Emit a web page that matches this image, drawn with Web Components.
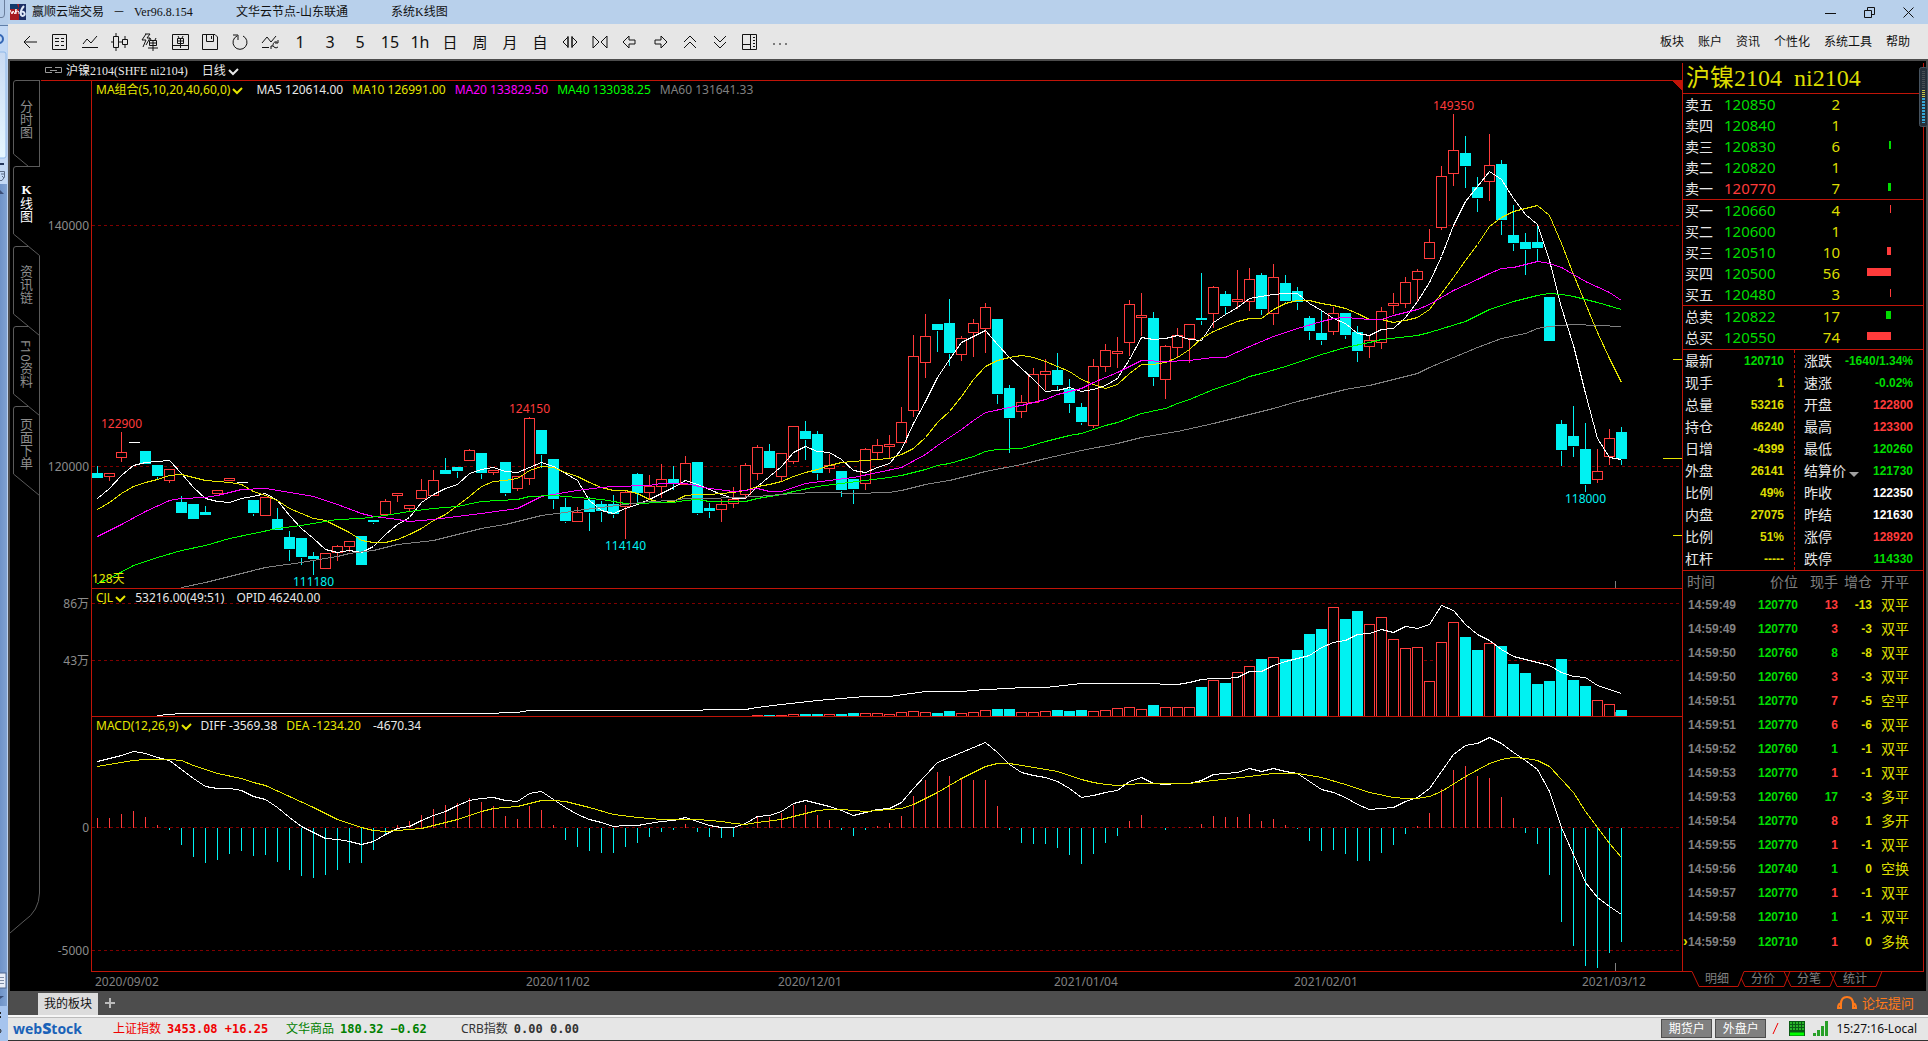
<!DOCTYPE html>
<html lang="zh-CN">
<head>
<meta charset="utf-8">
<title>赢顺云端交易</title>
<style>
  html, body { margin: 0; height: 100%; background: #000; }
  body {
    --red: #c01408;
    --up: #ff3b3b;
    --down: #00f2f2;
    --green: #00dc00;
    --yellow: #dcdc00;
    --gray: #808080;
    --white: #e8e8e8;
    --frame: #4d4d4d;
    --panel: #e6e6e6;
    --ui: "Noto Sans", "Noto Sans CJK SC", sans-serif;
    --song: "Liberation Serif", "Noto Sans CJK SC", serif;
    --num: "Liberation Sans", "Noto Sans CJK SC", sans-serif;
    font: 12px/18px var(--ui);
    color: var(--white);
    overflow: hidden;
  }
</style>
</head>
<body>
<trade-app>
  <title-bar slot="title"></title-bar>
  <tool-bar slot="tools"></tool-bar>
  <side-tabs slot="side"></side-tabs>
  <k-chart slot="chart"></k-chart>
  <quote-panel slot="quote" name="沪镍2104" code="ni2104"></quote-panel>
  <board-bar slot="boards"></board-bar>
  <status-bar slot="status"></status-bar>
</trade-app>

<script>
const define = (name, css, html, after) => {
  customElements.define(name, class extends HTMLElement {
    constructor() {
      super();
      this.attachShadow({ mode: "open" });
    }

    connectedCallback() {
      const markup = typeof html === "function" ? html(this) : html;
      this.shadowRoot.innerHTML = `
        <style>
          *, :host { box-sizing: border-box; }
          button { font: inherit; color: inherit; background: none; border: 0; padding: 0; margin: 0; white-space: nowrap; }
          svg { display: block; }
          ${css}
        </style>${markup}`;
      if (after) after(this);
    }
  });
};

/* ---------- frame ---------- */

define("trade-app", `
  :host { display: flex; height: 100vh; }
  .rest { flex: none; width: 8px; }
  .window { flex: 1; min-width: 0; display: flex; flex-direction: column; }
  .main { flex: 1; min-height: 0; display: flex; background: #000; border: 2px solid var(--frame); border-bottom: 0; padding-right: 2px; }
  slot[name=side], slot[name=quote] { display: block; flex: none; }
  slot[name=side] { width: 31px; }
  slot[name=quote] { width: 242px; }
  slot[name=chart] { display: block; flex: 1; min-width: 0; }
`, `
  <desk-edge class="rest"></desk-edge>
  <div class="window">
    <slot name="title"></slot>
    <slot name="tools"></slot>
    <div class="main">
      <slot name="side"></slot>
      <slot name="chart"></slot>
      <slot name="quote"></slot>
    </div>
    <slot name="boards"></slot>
    <slot name="status"></slot>
  </div>
`);

// sliver of the window that lies behind this one
define("desk-edge", `
  :host { display: block; background: #a6c4ee; overflow: hidden; }
`, `
  <svg width="8" height="1041" aria-hidden="true">
    <defs>
      <linearGradient id="a" x1="0" y1="0" x2="0" y2="1"><stop offset="0" stop-color="#c9daf2"/><stop offset="1" stop-color="#e6f7ff"/></linearGradient>
      <linearGradient id="b" x1="0" y1="0" x2="1" y2="0"><stop offset="0" stop-color="#6f93c8"/><stop offset="1" stop-color="#83a5d4"/></linearGradient>
    </defs>
    <rect width="8" height="25" fill="#b5cdea"/>
    <path d="M0 17.500H2Q4.500 17.500 4.500 14V0" fill="none" stroke="#6b7f9c"/>
    <path d="M0 25.500H8" stroke="#5f7ea8"/>
    <rect y="26" width="8" height="158" fill="#c3d9f5"/>
    <circle cx="-1" cy="39" r="4" fill="none" stroke="#3466b4" stroke-width="2"/>
    <rect x="-4" y="52" width="10" height="106" rx="2" fill="url(#a)" stroke="#8fb8e8"/>
    <path d="M0 164H4" stroke="#23375c" stroke-width="2"/>
    <path d="M0 171.500H4.500V177L2 180.500H0M1 174H4M2 176L4 178" fill="none" stroke="#5a6b85"/>
    <rect y="184" width="8" height="822" fill="url(#b)"/>
    <path d="M0 190L4 194H0z" fill="#3b4f78"/>
    <rect x="-3" y="973" width="9" height="15" fill="#e8eef8" stroke="#50688f"/>
    <path d="M0 977.500H4M0 980.500H4M0 983.500H4" stroke="#7d8ca5"/>
    <path d="M0 999V996H4z" fill="#3b4f78"/>
    <path d="M7.500 26V1006" stroke="#bcd2f0"/>
    <path d="M0 1013H1M0 1017H1" stroke="#222" stroke-width="2"/>
    <circle cx="-1" cy="1031" r="2" fill="none" stroke="#222"/>
  </svg>
`);

define("title-bar", `
  :host { display: flex; align-items: center; height: 24px; background: #b8d0eb; color: #111; font: 12px/18px var(--song); white-space: pre; }
  .logo { margin: 0 6px 0 2px; }
  .name { width: 204px; display: flex; gap: 9px; }
  .node { width: 155px; }
  .win { margin-left: auto; display: flex; }
  .win button { width: 39px; height: 24px; display: grid; place-items: center; }
  .win svg { fill: none; stroke: #111; }
`, `
  <svg class="logo" width="16" height="16" aria-hidden="true">
    <rect width="16" height="16" fill="#1d2f66"/>
    <path d="M0 0H9V16H0z" fill="#a81c20"/><path d="M0 0H7L9 5H0z" fill="#123a6b"/>
    <path d="M0 6L2 10L3 7L5 10L6 5V10M6 8Q8 6 9 8V10" fill="none" stroke="#fff"/>
    <path d="M14 2Q10 6 11 11A2 2 0 1 0 12 8" fill="none" stroke="#dfe8f8" stroke-width="2"/>
  </svg>
  <span class="name"><span>赢顺云端交易</span><span>－</span><span>Ver96.8.154</span></span>
  <span class="node">文华云节点-山东联通</span>
  <span>系统K线图</span>
  <div class="win">
    <button aria-label="最小化"><svg width="11" height="11"><path d="M0 6.500H11"/></svg></button>
    <button aria-label="还原"><svg width="11" height="11"><path d="M.500 3.500H7.500V10.500H.500zM3.500 3V.500H10.500V7.500H8"/></svg></button>
    <button aria-label="关闭"><svg width="11" height="11"><path d="M.500 .500L10.500 10.500M10.500 .500L.500 10.500"/></svg></button>
  </div>
`);

/* ---------- toolbar ---------- */

const tools = [
  ["返回", "M16 9H3M9 3L3 9L9 15"],
  ["报价", "M1.500 1.500H15.500V16.500H1.500zM4 5.500H8M10 5.500H13M4 8.500H8M10 8.500H13M4 12.500H8M10 12.500H13"],
  ["分时", "M1 14.500H17M2 11L6 6L10 10L16 3"],
  ["K线", "M2.500 3.500H7.500V14.500H2.500zM5 0V3M5 15V18M11.500 6.500H16.500V11.500H11.500zM14 3V6M14 12V15M0 9H2M8 9H11"],
  ["闪电下单", "M5 1L1 7H5L2 14M4 1H9L6 5H9L5 12M8.500 7.500H15.500V12.500H8.500zM12 7V18M8 10H16M7 15H17M9 5L10 7M15 5L14 7"],
  ["下单", "M1.500 1.500H17.500V16.500H1.500zM6.500 5.500H12.500V10.500H6.500zM9.500 5V15M6 8H13M1 12.500H18M7 3L8 5M12 3L11 5"],
  ["保存", "M1.500 1.500H14L16.500 4V16.500H1.500zM5.500 2V8.500H12.500V2M10.500 3V6"],
  ["刷新", "M6 3A7 7 0 1 0 12 3M2 2H7V7"],
  ["画线刷新", "M1 14.500H8M1 10L6 4L10 9L15 3M16 9A3 3 0 1 0 17 14M17 7V10H14M10 16V13H12"],
  "1", "3", "5", "15", "1h", "日", "周", "月", "自",
  ["放大", "M7 4L2 9L7 14zM11 4L16 9L11 14zM7 3V15M11 3V15"],
  ["缩小", "M2 3V15L8 9zM16 3V15L10 9z"],
  ["左移", "M2 9L8 3V7H14V11H8V15z"],
  ["右移", "M16 9L10 3V7H4V11H10V15z"],
  ["上翻", "M3 9L9 3L15 9M3 15L9 9L15 15"],
  ["下翻", "M3 3L9 9L15 3M3 9L9 15L15 9"],
  ["布局", "M1.500 1.500H15.500V16.500H1.500zM9.500 2V16M2 11.500H9M12 4.500H14M12 7.500H14M12 10.500H14M12 13.500H14"],
  ["更多", "M2 11H4M8 11H10M14 11H16"],
];

define("tool-bar", `
  :host { display: flex; align-items: center; justify-content: space-between; height: 35px; background: var(--panel); color: #111; padding: 1px 18px 0 7px; }
  div { display: flex; }
  .tools button { width: 30px; height: 28px; display: grid; place-items: center; font: 15px/20px var(--ui); }
  .tools .num { font-size: 16px; }
  .tools svg { fill: none; stroke: #111; }
  .menu { gap: 14px; }
`, `
  <div class="tools">${tools.map((t) => typeof t === "string"
    ? `<button class="${/\d/.test(t) ? "num" : ""}">${t}</button>`
    : `<button aria-label="${t[0]}"><svg width="18" height="18"><path d="${t[1]}"/></svg></button>`).join("")}</div>
  <div class="menu">${["板块", "账户", "资讯", "个性化", "系统工具", "帮助"].map((m) => `<button>${m}</button>`).join("")}</div>
`);

/* ---------- left tabs ---------- */

define("side-tabs", `
  :host { display: block; position: relative; height: 100%; padding-top: 19px; }
  svg { position: absolute; left: 0; top: 0; fill: none; stroke: #5a5a5a; }
  nav { position: relative; display: flex; flex-direction: column; color: #8c8c8c; padding-left: 3px; }
  button { height: 80px; width: 26px; writing-mode: vertical-rl; font-size: 13px; line-height: 26px; padding-bottom: 4px; }
  button:first-child { height: 86px; padding-bottom: 8px; }
  .on { color: #fff; padding-bottom: 8px; }
  .on b { text-orientation: upright; font-family: var(--song); }
`, `
  <svg width="31" height="900" aria-hidden="true">
    <path d="M29.500 105.500V21M29.500 19.500H6Q3.500 19.500 3.500 22V93L18.500 105.500M18 105.500H30M29.500 19V106"/>
    <path d="M18 105.500H6Q3.500 105.500 3.500 108V173L29.500 194.500V832Q29 850 14 860L0 872"/>
    <path d="M18 185.500H6Q3.500 185.500 3.500 188V253L29.500 274.500"/>
    <path d="M18 265.500H6Q3.500 265.500 3.500 268V333L29.500 354.500"/>
    <path d="M18 345.500H6Q3.500 345.500 3.500 348V413L29.500 434.500"/>
  </svg>
  <nav>
    <button>分时图</button>
    <button class="on"><b>K</b>线图</button>
    <button>资讯链</button>
    <button>F10资料</button>
    <button>页面下单</button>
  </nav>
`);

/* ---------- chart ---------- */

// one candle per entry: u(p) / d(own) / n(o trade), then high, body top, body bottom, low
const candles = `
d465,473,478,478 u473,473,476,480 u431,452,457,461 n442,442,442,442 d451,451,464,464 d465,465,476,478 u469,469,480,482 d495,502,513,513
d504,504,519,519 d505,512,515,515 u490,490,493,493 u478,478,480,480 n482,482,482,482 d500,500,513,515 u497,497,515,515 d507,519,530,530
d530,537,549,560 d538,538,557,564 d551,556,559,574 u553,553,568,568 u544,546,552,560 u541,541,546,551 d536,536,565,565 d520,520,522,523
u498,501,514,514 u493,493,495,501 u505,505,508,510 u478,490,498,498 u469,480,495,495 d457,470,474,474 d467,467,471,477 u448,450,460,460
d453,453,473,478 u470,470,472,474 d462,462,493,495 u476,476,488,490 u416,418,478,484 d430,430,454,467 d459,459,499,508 d497,507,521,522
u506,512,521,521 d496,500,512,530 d500,504,511,521 d494,504,514,517 u489,492,506,538 d472,474,493,503 u474,486,492,499 u463,479,486,497
d465,479,483,489 u455,463,484,484 d462,462,513,514 d502,508,511,517 u498,504,509,521 u486,499,503,507 u462,465,494,497 u444,447,473,479
d443,451,468,468 u453,453,476,480 u425,426,461,463 d420,431,439,459 d430,434,473,479 u453,465,468,472 d471,471,490,496 d479,479,489,503
u447,449,483,489 u438,445,452,459 u434,444,446,457 u406,422,442,442 u334,356,410,416 u313,336,362,377 d323,324,330,351 d298,323,353,365
u335,338,354,360 u318,323,332,356 u302,307,328,352 d319,319,394,403 d384,388,418,452 u394,402,411,417 u367,374,402,402 u358,371,374,389
d352,370,385,390 d378,389,403,412 d402,407,422,424 u358,366,425,427 u343,350,366,371 u336,351,353,367 u299,304,342,355 u292,315,317,335
d311,318,377,385 u344,346,379,398 u327,335,347,356 u323,324,338,362 d272,318,320,324 u285,287,313,327 d290,294,306,314 u269,299,301,308
u267,279,301,310 d272,275,309,314 u263,277,313,324 d274,283,301,302 d286,291,302,309 d315,318,331,339 d309,333,340,344 u306,313,331,334
d312,313,335,338 d325,332,351,361 u335,340,346,357 u306,311,342,348 u292,303,305,313 u276,282,303,307 u268,271,279,300 u228,242,258,258
u165,176,227,229 u113,150,173,185 d135,153,166,187 d176,187,198,211 u133,165,181,200 d159,164,220,234 d204,235,243,250 d232,242,249,274
d224,242,248,261 d297,297,341,341 d419,424,450,465 d405,436,446,456 d422,449,484,491 u448,471,479,482 u428,438,456,464 d426,432,459,464
`.trim().split(/\s+/).map((s) => [s[0], ...s.slice(1).split(",").map(Number)]);

const ma5 = [498,488,475,465,462,461,460,473,487,498,501,502,498,496,493,500,515,528,538,549,552,550,552,546,534,524,517,502,494,488,484,473,469,467,471,472,467,462,466,473,480,500,510,513,508,504,499,493,487,480,484,489,494,498,498,486,476,466,452,446,451,452,459,470,472,467,463,449,423,401,377,359,342,336,330,344,357,368,379,391,390,387,391,389,385,378,359,337,339,338,335,339,340,322,314,307,298,296,294,293,293,303,310,318,323,333,335,329,328,317,301,282,256,225,201,186,171,179,198,214,224,260,307,345,393,438,457,459];
const ma10 = [509,502,493,486,482,479,475,474,477,480,481,482,484,491,495,500,508,513,518,520,526,532,540,542,542,539,534,528,520,514,505,496,486,481,480,478,470,466,467,472,476,482,487,490,490,493,499,502,501,495,494,494,493,492,490,486,484,481,476,472,469,465,462,461,460,459,458,454,448,437,422,411,396,379,366,360,357,355,357,361,366,371,379,384,388,384,373,364,364,362,357,349,338,331,326,321,318,318,309,303,300,300,303,305,308,313,319,319,322,320,317,309,293,277,260,244,226,217,211,208,205,215,243,274,303,332,358,382];
// sparse series: bar index, row
const ma20 = [0,536,2,524,4,511,6,500,7,498,9,497,10,495,12,489,14,488,16,492,18,496,20,504,22,513,23,516,25,519,26,521,28,519,30,516,32,513,35,508,36,502,37,496,38,494,39,492,40,490,42,487,43,486,46,485,47,483,49,483,51,488,53,491,54,490,55,488,56,491,57,491,58,487,59,483,61,480,63,477,65,472,67,467,69,454,70,445,72,429,73,420,74,412,76,407,77,405,79,399,80,394,82,388,83,382,85,372,87,360,89,361,91,360,93,357,94,357,96,346,98,336,100,328,102,321,103,318,104,317,105,318,106,319,107,319,108,315,110,309,111,304,113,290,115,279,116,273,117,268,118,267,120,261,121,263,122,267,124,281,126,292,127,300];
const ma40 = [0,583,1,578,3,565,5,557,7,550,9,545,11,538,13,533,15,528,17,525,20,519,22,518,24,515,26,511,28,508,30,506,32,501,35,499,36,496,38,495,40,497,42,499,43,501,44,503,48,502,49,500,50,499,51,501,54,501,55,498,57,494,58,491,60,486,62,483,64,480,66,477,67,475,69,469,70,465,71,463,73,456,74,451,75,449,77,448,79,441,81,435,82,433,84,425,85,422,87,413,89,408,90,403,91,399,93,389,95,381,96,376,97,373,99,366,101,358,102,354,104,347,106,342,107,339,110,335,111,332,114,321,116,309,118,301,120,295,121,293,122,294,123,296,125,302,127,309];
const ma60 = [7,587,9,582,12,573,14,567,17,562,19,558,20,556,21,553,23,550,25,544,28,540,30,534,32,528,34,524,35,521,37,515,39,512,40,510,42,507,44,504,46,501,48,500,49,498,51,498,53,497,55,496,57,494,58,493,60,492,61,492,63,493,66,492,67,490,69,484,71,480,74,471,77,464,79,458,82,450,85,443,87,437,90,431,93,423,96,414,98,408,100,401,102,395,104,389,106,385,108,379,110,373,111,367,113,357,115,347,117,338,119,333,120,328,121,326,123,324,127,326];

// volume tops, first bar tall enough to show is number 55
const volume = [715,715,715,714,714,714,714,714,713,713,713,714,712,711,712,713,711,713,712,710,709,709,712,712,711,710,711,710,711,710,708,707,709,705,707,707,707,687,680,683,672,666,659,657,659,650,634,629,607,619,611,624,617,639,648,647,681,642,622,637,650,643,646,664,673,684,681,659,680,686,700,704,710];
const opid = [5,715,7,713,32,713,35,712,36,710,50,710,51,709,54,709,55,707,57,704,60,700,62,698,64,696,66,696,69,691,72,691,74,689,76,688,77,687,79,687,82,683,88,683,89,684,90,684,91,682,92,679,93,678,94,678,95,677,96,671,97,671,98,665,99,661,101,655,102,647,103,642,104,640,105,634,106,633,107,629,108,632,109,626,110,628,111,624,112,605,113,610,114,624,115,634,116,640,117,649,118,656,119,659,120,662,121,665,122,672,123,676,124,677,125,685,126,689,127,693];

const hist = [817,817,813,810,816,824,829,844,856,862,859,853,850,855,854,861,869,875,877,874,869,862,862,849,834,824,820,814,808,804,802,797,801,805,815,818,805,809,824,839,846,850,852,852,846,842,836,831,829,823,831,836,837,836,827,816,816,812,804,804,814,819,829,835,829,825,822,815,795,779,771,775,777,779,779,805,829,842,843,843,847,854,863,853,842,835,820,814,827,829,827,826,823,815,816,816,813,820,818,824,828,840,850,849,853,860,860,852,844,833,825,812,788,769,765,775,777,796,817,832,843,874,921,945,965,967,952,941];
const diff = [761,758,755,751,753,757,760,769,778,786,788,788,790,796,799,807,817,826,832,838,839,841,844,841,834,828,826,820,815,811,805,800,798,797,800,801,793,791,799,807,814,819,822,826,825,825,823,821,820,817,821,825,827,827,823,816,815,811,803,800,803,806,810,815,812,809,808,802,788,775,762,757,752,747,742,752,764,772,775,777,781,788,797,795,792,790,781,777,783,784,783,783,780,774,773,772,768,771,768,771,773,781,789,792,797,804,809,808,807,801,797,788,771,754,745,743,737,743,752,760,769,791,827,854,882,897,906,914];
const dea = [0,766,1,764,3,760,4,759,6,759,7,760,8,765,10,773,12,778,13,782,14,785,16,796,18,807,20,819,22,827,23,830,24,831,25,830,26,829,27,828,28,825,30,819,31,815,32,811,33,808,35,806,37,800,38,800,39,801,41,807,43,814,45,817,47,819,50,819,52,821,53,823,54,824,55,822,57,819,59,813,60,810,61,809,62,809,64,811,65,810,67,808,68,804,70,792,72,778,74,766,75,763,76,763,77,765,80,771,82,779,83,782,84,784,85,785,87,783,91,783,93,780,96,776,98,773,100,773,102,777,104,784,106,792,108,797,109,798,110,798,111,796,112,791,114,776,116,763,117,759,118,757,119,758,120,760,121,766,122,779,123,792,124,811,125,827,126,843,127,857];

const dense = (a) => a.flatMap((y, i) => [i, y]);

const panes = {
  price: {
    rows: [81, 588],
    grid: [[225, "140000"], [466, "120000"]],
    lines: [[dense(ma5), "#fff"], [dense(ma10), "#e6e600"], [ma20, "#ff00ff"], [ma40, "#00ff00"], [ma60, "#808080"]],
    labels: [[2, 423, "122900", "up"], [18, 581, "111180", "down"], [36, 408, "124150", "up"], [44, 545, "114140", "down"], [113, 105, "149350", "up"], [124, 498, "118000", "down"]],
    marks: [[359, 9], [458, 19], [535, 9]],
    cursor: [580, 588],
  },
  volume: { rows: [589, 716], grid: [[603, "86万"], [660, "43万"]], lines: [[opid, "#fff"]], cursor: [711, 716] },
  macd: { rows: [717, 971], grid: [[827, "0"], [950, "-5000"]], lines: [[dense(diff), "#fff"], [dea, "#e6e600"]], cursor: [962, 971] },
};

class ChartPane extends HTMLElement {
  constructor() {
    super();
    this.attachShadow({ mode: "open" });
    this.shadowRoot.innerHTML = `
      <style>
        :host { display: grid; min-height: 0; }
        svg, .legend { grid-area: 1 / 1; }
        svg { width: 100%; height: 100%; display: block; min-height: 0; overflow: visible; contain: size; }
        .legend { display: flex; gap: 9px; padding-left: 55px; height: 18px; white-space: pre; z-index: 1; }
        path, rect, line, polyline { shape-rendering: crispEdges; }
        text { font: 12px var(--ui); }
        .frame { stroke: var(--red); }
        .grid { stroke: #800000; stroke-dasharray: 3 3; }
        .axis { fill: #8c8c8c; text-anchor: end; }
        .up { stroke: var(--up); fill: #000; }
        .down { stroke: var(--down); fill: var(--down); }
        .none { stroke: #fff; }
        .mark { stroke: #e6e600; }
        .tag { text-anchor: middle; stroke: none; }
        .tag.up { fill: var(--up); }
      </style>
      <svg></svg>
      <div class="legend"><slot></slot></div>`;
  }

  connectedCallback() {
    new ResizeObserver(() => this.draw()).observe(this);
    this.draw();
  }

  draw() {
    const kind = this.getAttribute("kind");
    const p = panes[kind];
    const svg = this.shadowRoot.querySelector("svg");
    const w = this.clientWidth;
    const h = this.clientHeight;
    if (!w || !h) return;
    const step = (w - 51) / 1590 * 12;
    const X = (i) => Math.round(56 + step * i) + 0.5;
    const Y = (r) => Math.round((r - p.rows[0]) / (p.rows[1] - p.rows[0]) * (h - 1)) + 0.5;
    const wick = (x, a, b, c) => `<line class="${c}" x1="${x}" x2="${x}" y1="${a}" y2="${b}"/>`;
    let out = "";

    for (const [r, text] of p.grid) {
      out += `<line class="grid" x1="51" x2="${w}" y1="${Y(r)}" y2="${Y(r)}"/>`;
      out += `<text class="axis" x="48" y="${Y(r) + 4.5}">${text}</text>`;
    }

    const bar = (i, top, bottom, c) =>
      `<rect class="${c}" x="${X(i) - 5}" y="${Y(top)}" width="10" height="${Math.max(1, Y(bottom) - Y(top) - 1)}"/>`;

    if (kind === "price") {
      candles.forEach(([t, hi, top, bottom, lo], i) => {
        if (t === "n") {
          out += `<path class="none" d="M${X(i) - 5} ${Y(top)}h11"/>`;
          return;
        }
        const c = t === "u" ? "up" : "down";
        if (hi < top) out += wick(X(i), Y(hi), Y(top), c);
        if (lo > bottom) out += wick(X(i), Y(bottom), Y(lo), c);
        out += bar(i, top, bottom + (t === "u" ? 1 : 0), c);
      });
    }
    if (kind === "volume") {
      volume.forEach((top, n) => { out += bar(n + 55, top, 717, candles[n + 55][0] === "u" ? "up" : "down"); });
    }
    if (kind === "macd") {
      hist.forEach((r, i) => { if (r !== 827) out += wick(X(i), Y(827), Y(r), r < 827 ? "up" : "down"); });
    }

    for (const [pts, color] of p.lines) {
      let s = "";
      for (let n = 0; n < pts.length; n += 2) s += `${X(pts[n])},${Y(pts[n + 1])} `;
      out += `<polyline fill="none" stroke="${color}" points="${s}"/>`;
    }
    for (const [i, r, text, c] of p.labels || []) {
      out += `<text class="tag ${c}" x="${X(i)}" y="${Y(r) + 4.5}">${text}</text>`;
    }
    for (const [r, len] of p.marks || []) out += `<path class="mark" d="M${w - len} ${Y(r)}H${w}"/>`;
    if (kind === "price") {
      out += `<text x="51" y="${h - 6}" fill="#e6e600">128天</text><path d="M${w - 10} 0H${w}V10z" fill="#c01408"/>`;
    }
    const cx = X(126) + 6;
    out += `<line stroke="#808080" x1="${cx}" x2="${cx}" y1="${Y(p.cursor[0])}" y2="${Y(p.cursor[1])}"/>`;
    out += `<path class="frame" fill="none" d="M50.5 0V${h - 0.5}H${w}"/>`;
    svg.innerHTML = out;
  }
}
customElements.define("chart-pane", ChartPane);

const arrow = `<svg width="11" height="18" viewBox="0 0 11 18" fill="none" stroke="currentColor" stroke-width="2"><path d="M1 8L5 12L10 7"/></svg>`;

define("k-chart", `
  :host { display: flex; flex-direction: column; height: 100%; min-width: 0; }
  header { display: flex; align-items: center; height: 20px; padding-left: 4px; border-bottom: 1px solid var(--red); font-family: var(--song); }
  .link { margin-right: 4px; fill: none; stroke: #999; }
  .period { display: flex; align-items: center; gap: 2px; margin-left: 14px; }
  chart-pane { flex-basis: 0; }
  .price { flex-grow: 508; }
  .volume { flex-grow: 128; }
  .macd { flex-grow: 255; }
  .name { display: flex; gap: 2px; color: #e6e600; }
  .price .name { margin-right: 4px; }
  .dates { display: flex; height: 19px; line-height: 20px; color: #808080; }
  .dates span { flex-basis: 0; white-space: nowrap; overflow: visible; }
`, `
  <header>
    <svg class="link" width="17" height="9"><path d="M7 1.500H.500V6.500H7M10 1.500H16.500V6.500H10M5 4.500H12"/></svg>
    <span>沪镍2104(SHFE ni2104)</span>
    <button class="period">日线${arrow}</button>
  </header>
  <chart-pane class="price" kind="price">
    <button class="name">MA组合(5,10,20,40,60,0)${arrow}</button>
    <span>MA5 120614.00</span>
    <span style="color:#e6e600">MA10 126991.00</span>
    <span style="color:#ff00ff">MA20 133829.50</span>
    <span style="color:#00ff00">MA40 133038.25</span>
    <span style="color:#808080">MA60 131641.33</span>
  </chart-pane>
  <chart-pane class="volume" kind="volume">
    <button class="name">CJL${arrow}</button>
    <span>53216.00(49:51)</span>
    <span> OPID 46240.00</span>
  </chart-pane>
  <chart-pane class="macd" kind="macd">
    <button class="name">MACD(12,26,9)${arrow}</button>
    <span>DIFF -3569.38</span>
    <span style="color:#e6e600">DEA -1234.20</span>
    <span> -4670.34</span>
  </chart-pane>
  <div class="dates">
    <span style="flex-grow:54"></span>
    <span style="flex-grow:431">2020/09/02</span>
    <span style="flex-grow:252">2020/11/02</span>
    <span style="flex-grow:276">2020/12/01</span>
    <span style="flex-grow:240">2021/01/04</span>
    <span style="flex-grow:288">2021/02/01</span>
    <span style="flex-grow:100">2021/03/12</span>
  </div>
`);

/* ---------- quotes ---------- */

const depth = [
  [["卖五", 120850, 2, 0], ["卖四", 120840, 1, 0], ["卖三", 120830, 6, 2, "g"], ["卖二", 120820, 1, 0], ["卖一", 120770, 7, 3, "g", "r"]],
  [["买一", 120660, 4, 1, "r"], ["买二", 120600, 1, 0], ["买三", 120510, 10, 4, "r"], ["买四", 120500, 56, 24, "r"], ["买五", 120480, 3, 1, "r"]],
  [["总卖", 120822, 17, 5, "g"], ["总买", 120550, 74, 24, "r"]],
];

const stats = [
  ["最新", "120710", "g", "涨跌", "-1640/1.34%", "g"],
  ["现手", "1", "y", "速涨", "-0.02%", "g"],
  ["总量", "53216", "y", "开盘", "122800", "r"],
  ["持仓", "46240", "y", "最高", "123300", "r"],
  ["日增", "-4399", "y", "最低", "120260", "g"],
  ["外盘", "26141", "y", "结算价", "121730", "g"],
  ["比例", "49%", "y", "昨收", "122350", "w"],
  ["内盘", "27075", "y", "昨结", "121630", "w"],
  ["比例", "51%", "y", "涨停", "128920", "r"],
  ["杠杆", "-----", "y", "跌停", "114330", "g"],
];

const ticks = [
  ["14:59:49", 120770, 13, "r", -13, "双平"],
  ["14:59:49", 120770, 3, "r", -3, "双平"],
  ["14:59:50", 120760, 8, "g", -8, "双平"],
  ["14:59:50", 120760, 3, "r", -3, "双平"],
  ["14:59:51", 120770, 7, "r", -5, "空平"],
  ["14:59:51", 120770, 6, "r", -6, "双平"],
  ["14:59:52", 120760, 1, "g", -1, "双平"],
  ["14:59:53", 120770, 1, "r", -1, "双平"],
  ["14:59:53", 120760, 17, "g", -3, "多平"],
  ["14:59:54", 120770, 8, "r", 1, "多开"],
  ["14:59:55", 120770, 1, "r", -1, "双平"],
  ["14:59:56", 120740, 1, "g", 0, "空换"],
  ["14:59:57", 120770, 1, "r", -1, "双平"],
  ["14:59:58", 120710, 1, "g", -1, "双平"],
  ["14:59:59", 120710, 1, "r", 0, "多换"],
];

define("quote-panel", `
  :host { display: flex; flex-direction: column; height: 100%; position: relative; }
  .body { flex: 1; display: flex; flex-direction: column; border: 1px solid var(--red); border-top: 0; border-bottom: 0; margin-top: 2px; }
  h1 { margin: 0; height: 31px; padding-left: 3px; display: flex; gap: 12px; border-bottom: 1px solid var(--red); font: 24px/30px var(--song); color: var(--yellow); white-space: nowrap; }
  table { border-collapse: collapse; table-layout: fixed; width: 100%; }
  th, td { padding: 0; font-weight: normal; text-align: right; white-space: nowrap; }
  .r { color: var(--up); } .g { color: var(--green); } .y { color: var(--yellow); } .w { color: #fff; }

  .depth { border-bottom: 1px solid var(--red); }
  .depth.sum { padding-bottom: 1px; }
  .depth tr { height: 21px; font-size: 15px; line-height: 21px; }
  .depth th { text-align: left; padding-left: 2px; font-size: 14px; }
  .depth .price { text-align: left; }
  .depth i { display: block; height: 8px; margin: 0 0 3px auto; background: currentColor; }

  .stats { display: flex; border-bottom: 1px solid var(--red); }
  .stats dl { margin: 0; display: grid; grid-template-columns: auto 1fr; grid-auto-rows: 22px; line-height: 22px; }
  .stats dl:first-child { width: 112px; padding: 0 10px 0 2px; border-right: 1px dashed var(--red); }
  .stats dl:last-child { flex: 1; grid-template-columns: 28px 1fr; padding: 0 10px 0 9px; }
  .stats dt { font-size: 14px; display: flex; align-items: center; gap: 3px; white-space: nowrap; }
  .stats dd { margin: 0; text-align: right; font: bold 12px/22px var(--num); }
  .stats button { flex: none; width: 10px; height: 5px; margin-top: 6px; border: solid transparent; border-width: 5px 5px 0; border-top-color: #a0a0a0; }

  .ticks th { height: 22px; font-size: 14px; color: var(--gray); line-height: 22px; }
  .ticks td { height: 24px; font: bold 12px/24px var(--num); }
  .ticks th:first-child { text-align: left; padding-left: 4px; }
  .ticks td:first-child { text-align: left; color: var(--gray); }
  .ticks td:last-child, .ticks th:last-child { font-size: 14px; font-weight: normal; padding-right: 14px; }
  .cue { display: inline-block; width: 5px; color: var(--yellow); font-size: 14px; }

  nav { position: relative; height: 20px; padding-left: 12px; display: flex; color: var(--gray); }
  nav svg { position: absolute; left: 0; top: 0; fill: none; stroke: var(--red); }
  nav button { position: relative; width: 46px; height: 16px; line-height: 16px; }
  .meter { position: absolute; right: -4px; top: 6px; }
`, (el) => `
  <div class="body">
    <h1><span>${el.getAttribute("name")}</span><span>${el.getAttribute("code")}</span></h1>
    ${depth.map((group, g) => `<div class="depth ${g === 2 ? "sum" : ""}"><table>
      <colgroup><col style="width:41px"><col style="width:60px"><col style="width:56px"><col style="width:51px"><col></colgroup>
      ${group.map(([name, price, n, len, bar, tone]) => `<tr><th scope="row">${name}</th><td class="price ${tone || "g"}">${price}</td><td class="y">${n}</td><td>${len ? `<i class="${bar}" style="width:${len}px"></i>` : ""}</td><td></td></tr>`).join("")}
    </table></div>`).join("")}
    <div class="stats">
      <dl>${stats.map((s) => `<dt>${s[0]}</dt><dd class="${s[2]}">${s[1]}</dd>`).join("")}</dl>
      <dl>${stats.map((s) => `<dt>${s[3]}${s[3] === "结算价" ? `<button aria-label="切换"></button>` : ""}</dt><dd class="${s[5]}">${s[4]}</dd>`).join("")}</dl>
    </div>
    <table class="ticks">
      <colgroup><col style="width:58px"><col style="width:57px"><col style="width:40px"><col style="width:34px"><col></colgroup>
      <tr><th>时间</th><th>价位</th><th>现手</th><th>增仓</th><th>开平</th></tr>
      ${ticks.map(([t, p, n, tone, d, kind], i) => `<tr><td><span class="cue">${i === ticks.length - 1 ? "›" : ""}</span>${t}</td><td class="g">${p}</td><td class="${tone}">${n}</td><td class="y">${d}</td><td class="y">${kind}</td></tr>`).join("")}
    </table>
  </div>
  <nav>
    <svg width="242" height="20" aria-hidden="true">
      <path d="M0 .500H10L17 15.500H56L62 .500H242"/>
      <path d="M59 7L63 15.500H102L108 .500"/>
      <path d="M102 .500L109 15.500H148L154 .500"/>
      <path d="M148 .500L155 15.500H194L200 .500"/>
    </svg>
    <button>明细</button><button>分价</button><button>分笔</button><button>统计</button>
  </nav>
  <svg class="meter" width="9" height="60" aria-hidden="true">
    <rect x=".500" y=".500" width="8" height="59" rx="2" fill="#26303a" stroke="#46535f"/>
    <path d="M4.500 4V22" stroke="#4a4f55" stroke-width="3" stroke-dasharray="1 1"/>
    <path d="M4.500 23V30" stroke="#c8c848" stroke-width="3" stroke-dasharray="1 1"/>
    <path d="M4.500 31V56" stroke="#38a8d8" stroke-width="3" stroke-dasharray="2 1"/>
  </svg>
`);

/* ---------- bottom ---------- */

define("board-bar", `
  :host { display: flex; align-items: center; height: 24px; padding: 0 14px 0 30px; background: var(--frame); }
  .tab { align-self: flex-end; width: 60px; height: 22px; background: #dcdcdc; color: #111; }
  .add { margin-left: 6px; }
  .add svg { stroke: #bbb; stroke-width: 2; }
  a { margin-left: auto; display: flex; align-items: center; gap: 5px; color: #ff7a1a; font-size: 13px; text-decoration: none; }
  a svg { fill: none; stroke: currentColor; stroke-width: 2; }
`, `
  <button class="tab">我的板块</button>
  <button class="add" aria-label="新增板块"><svg width="12" height="12"><path d="M6 1V11M1 6H11"/></svg></button>
  <a href="#forum"><svg width="20" height="16"><path d="M4 9Q4 2 10 2T16 9M4 8Q1 9 1 13H4zM16 8Q19 9 19 13H16z"/></svg>论坛提问</a>
`);

define("status-bar", `
  :host { display: flex; align-items: center; height: 26px; padding: 0 11px 0 5px; background: var(--panel); border-top: 2px solid #f6f6f6; border-bottom: 1px solid #333; box-shadow: inset 0 1px #bbb; color: #333; white-space: pre; }
  .brand { width: 100px; font: bold 14px/22px "Open Sans", sans-serif; color: #1a62b8; }
  .brand b { font-size: 16px; }
  .index { display: flex; gap: 6px; }
  .index b { font: bold 12px/18px "DejaVu Sans Mono", monospace; }
  .up { color: #f00000; width: 173px; }
  .down { color: #008000; width: 175px; }
  .right { margin-left: auto; display: flex; align-items: center; }
  .right button { width: 51px; height: 19px; margin-right: 3px; background: var(--gray); border: 1px solid var(--frame); color: #fff; line-height: 16px; }
  .right svg { margin-right: 8px; }
  time { color: #111; }
`, `
  <span class="brand">web<b>S</b>tock</span>
  <span class="index up">上证指数<b>3453.08 +16.25</b></span>
  <span class="index down">文华商品<b>180.32 −0.62</b></span>
  <span class="index">CRB指数<b>0.00 0.00</b></span>
  <div class="right">
    <button>期货户</button><button>外盘户</button>
    <svg width="12" height="14" aria-hidden="true"><path d="M9 1L4 12" stroke="#f00000" fill="none"/></svg>
    <svg width="16" height="15" aria-hidden="true"><rect width="16" height="15" fill="#0a5a14"/><path d="M1 2H15M1 5H15M1 8H15" stroke="#28b428" stroke-width="2" stroke-dasharray="2 1"/><path d="M1 13H15" stroke="#00ff00" stroke-width="3"/></svg>
    <svg width="15" height="15" fill="#28a028" aria-hidden="true"><path d="M0 12H3V15H0zM4 9H7V15H4zM8 5H11V15H8zM12 0H15V15H12z"/></svg>
    <time>15:27:16-Local</time>
  </div>
`);
</script>
</body>
</html>
